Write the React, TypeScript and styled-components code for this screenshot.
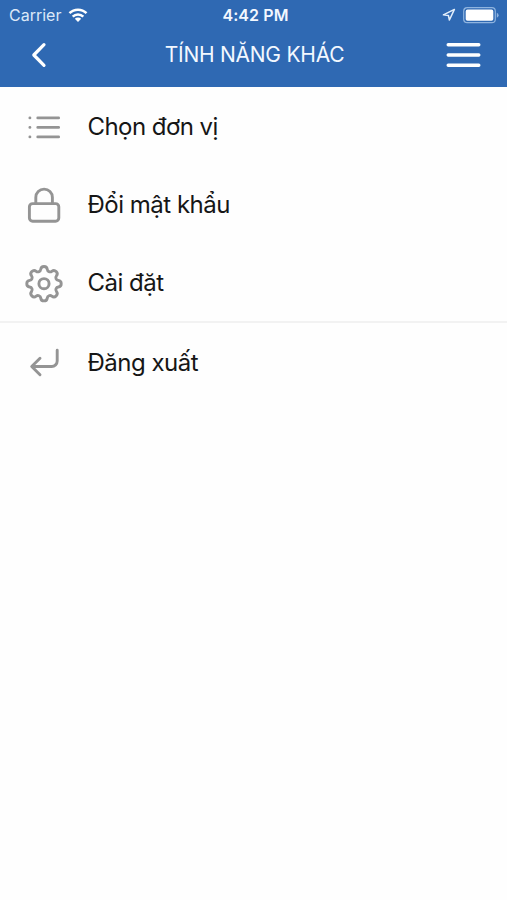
import React from "react";
import styled, { createGlobalStyle } from "styled-components";

const GlobalStyle = createGlobalStyle`
  * { box-sizing: border-box; }
  html, body { margin: 0; background: #fefefe; }
  body { font-family: Inter, "Noto Sans", sans-serif; }
`;

const Screen = styled.div`
  width: 100%;
  height: 900px;
  overflow: hidden;
  background: #fefefe;
`;

const Header = styled.header`
  height: 87px;
  background: #2f69b3;
  color: #f3f8ff;
`;

const StatusBar = styled.div`
  height: 30px;
  display: grid;
  grid-template-columns: 1fr auto 1fr;
  align-items: center;
  padding: 0 8px 0 9px;
`;

const StatusGroup = styled.div<{ $end?: boolean }>`
  display: flex;
  align-items: center;
  justify-content: ${(p) => (p.$end ? "flex-end" : "flex-start")};
  gap: 7px;
`;

const Carrier = styled.span`
  font-size: 16px;
  line-height: 30px;
  color: #dbe8f8;
`;

const Clock = styled.span`
  font-size: 16px;
  line-height: 30px;
  font-weight: 600;
  letter-spacing: 0.1px;
  padding-left: 3px;
`;

const NavBar = styled.div`
  height: 49px;
  display: grid;
  grid-template-columns: 80px 1fr 80px;
  align-items: center;
`;

const NavButton = styled.button<{ $end?: boolean }>`
  display: flex;
  justify-content: ${(p) => (p.$end ? "flex-end" : "flex-start")};
  padding: ${(p) => (p.$end ? "0 26px 0 0" : "0 0 0 31px")};
  border: 0;
  background: none;
  color: #fff;
`;

const Title = styled.h1`
  margin: 0;
  padding-left: 2px;
  font-size: 21px;
  font-weight: 400;
  letter-spacing: -0.25px;
  line-height: 49px;
  text-align: center;
  white-space: nowrap;
`;

const Group = styled.ul<{ $divided?: boolean }>`
  list-style: none;
  margin: 0;
  padding: 0;
  border-top: ${(p) => (p.$divided ? "2px solid #f2f2f2" : "0")};
`;

const Row = styled.li`
  height: 78px;
  display: flex;
  align-items: center;
  padding: 2px 0 0 24px;
`;

const IconSlot = styled.span`
  width: 40px;
  height: 40px;
  margin-right: 23.5px;
  color: #949494;
  svg { display: block; }
`;

const Label = styled.span<{ $spacing: number }>`
  font-size: 24px;
  line-height: 40px;
  letter-spacing: ${(p) => p.$spacing}px;
  color: #161616;
  white-space: nowrap;
`;

const Glyph = ({ children }: { children: React.ReactNode }) => (
  <svg width="40" height="40" viewBox="0 0 40 40" fill="none" stroke="currentColor"
    strokeWidth="2.9" strokeLinecap="round" strokeLinejoin="round">
    {children}
  </svg>
);

const gearOutline = (() => {
  const point = (deg: number) => {
    const a = (deg * Math.PI) / 180;
    return `${(20 + 14.65 * Math.sin(a)).toFixed(2)} ${(20.7 - 14.65 * Math.cos(a)).toFixed(2)}`;
  };
  let d = `M${point(-12.94)}`;
  for (let i = 0; i < 8; i++) {
    d += `A3.3 3.3 0 0 1 ${point(i * 45 + 12.94)}A2.8 2.8 0 0 0 ${point(i * 45 + 32.06)}`;
  }
  return d + "Z";
})();

const ListIcon = () => (
  <Glyph>
    <path d="M13.8 10.9H34.6M13.8 20.4H34.6M13.8 29.9H34.6" />
    <path d="M5.9 10.9h.01M5.9 20.4h.01M5.9 29.9h.01" />
  </Glyph>
);
const LockIcon = () => (
  <Glyph>
    <rect x="5.4" y="18.6" width="29.4" height="17.6" rx="3.2" />
    <path d="M11.8 18.3V12.4a8.3 8.3 0 0 1 16.6 0V18.3" />
  </Glyph>
);
const GearIcon = () => (
  <Glyph>
    <path d={gearOutline} />
    <circle cx="20" cy="20.7" r="5.1" />
  </Glyph>
);
const ReturnIcon = () => (
  <Glyph>
    <path d="M33.2 7.2V18a5.5 5.5 0 0 1-5.5 5.5H8M16 15.3L7.7 23.5L16 31.7" />
  </Glyph>
);

const WifiIcon = () => (
  <svg width="20" height="14.5" viewBox="0 0 20 15" fill="none" stroke="#fff" strokeWidth="2.6">
    <path d="M1.2 5.4a12.5 12.5 0 0 1 17.6 0M4.5 8.9a7.8 7.8 0 0 1 11 0" />
    <path d="M10 14.4L6.7 11.1a4.7 4.7 0 0 1 6.6 0Z" fill="#fff" stroke="none" />
  </svg>
);
const LocationIcon = () => (
  <svg width="14" height="14" viewBox="0 0 14 14" fill="none" stroke="#e3eefb" strokeWidth="1.5" strokeLinejoin="round">
    <path d="M12.4 1.4L1.4 6.8L6.4 7.4L7.4 12Z" />
  </svg>
);
const BatteryIcon = () => (
  <svg width="36" height="17" viewBox="0 0 36 17">
    <rect x=".7" y=".7" width="31.6" height="15" rx="3.5" fill="none" stroke="#8fb4df" strokeWidth="1.2" />
    <rect x="2.7" y="2.6" width="27.6" height="11.2" rx="1.8" fill="#fff" />
    <path d="M33.8 5.7q1.8.6 1.8 2.5t-1.8 2.5Z" fill="#8fb4df" />
  </svg>
);
const BackIcon = () => (
  <svg width="16" height="26" viewBox="0 0 16 26" fill="none" stroke="currentColor" strokeWidth="3.2" strokeLinecap="round" strokeLinejoin="round">
    <path d="M13 2.7L2.8 13L13 23.3" />
  </svg>
);
const MenuIcon = () => (
  <svg width="35" height="26" viewBox="0 0 35 26" fill="none" stroke="currentColor" strokeWidth="3.4" strokeLinecap="round">
    <path d="M2.2 2.8H32.8M2.2 13H32.8M2.2 23.2H32.8" />
  </svg>
);

export default function App() {
  return (
    <>
      <GlobalStyle />
      <Screen>
        <Header>
          <StatusBar>
            <StatusGroup>
              <Carrier>Carrier</Carrier>
              <WifiIcon />
            </StatusGroup>
            <Clock>4:42 PM</Clock>
            <StatusGroup $end>
              <LocationIcon />
              <BatteryIcon />
            </StatusGroup>
          </StatusBar>
          <NavBar>
            <NavButton aria-label="Back"><BackIcon /></NavButton>
            <Title>TÍNH NĂNG KHÁC</Title>
            <NavButton $end aria-label="Menu"><MenuIcon /></NavButton>
          </NavBar>
        </Header>
        <main>
          <Group>
            <Row><IconSlot><ListIcon /></IconSlot><Label $spacing={-0.55}>Chọn đơn vị</Label></Row>
            <Row><IconSlot><LockIcon /></IconSlot><Label $spacing={-0.5}>Đổi mật khẩu</Label></Row>
            <Row><IconSlot><GearIcon /></IconSlot><Label $spacing={-0.5}>Cài đặt</Label></Row>
          </Group>
          <Group $divided>
            <Row><IconSlot><ReturnIcon /></IconSlot><Label $spacing={-0.5}>Đăng xuất</Label></Row>
          </Group>
        </main>
      </Screen>
    </>
  );
}
